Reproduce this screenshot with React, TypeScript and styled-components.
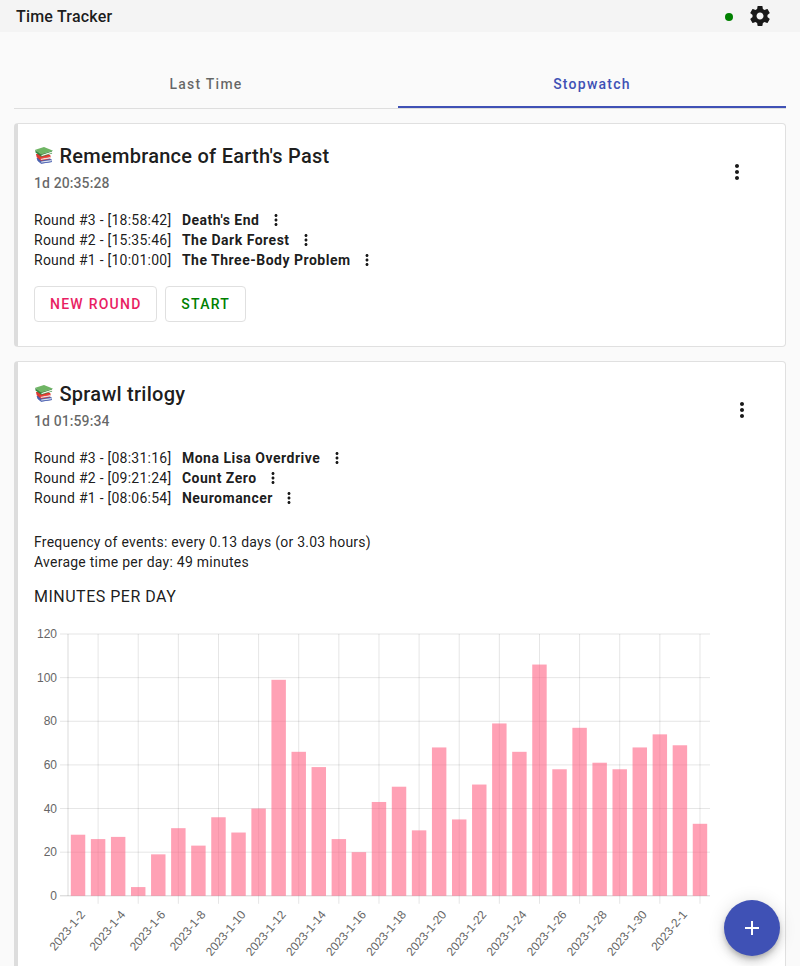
import React from "react";
import styled, { createGlobalStyle } from "styled-components";

const GlobalStyle = createGlobalStyle`
  * { box-sizing: border-box; }
  html, body, #root { height: 100%; }
  body {
    margin: 0;
    overflow: hidden;
    background: #fafafa;
    color: rgba(0, 0, 0, 0.9);
    font-family: Roboto, "Liberation Sans", sans-serif;
    font-size: 14px;
    line-height: 20px;
    -webkit-font-smoothing: antialiased;
  }
`;

const Page = styled.div`
  height: 966px;
  overflow: hidden;
`;

const TopBar = styled.header`
  display: flex;
  align-items: center;
  height: 32px;
  padding: 0 28px 0 16px;
  background: #f4f4f4;
`;

const AppTitle = styled.h1`
  flex: 1;
  margin: 0;
  padding-top: 1px;
  font-size: 16px;
  line-height: 31px;
  font-weight: 500;
  letter-spacing: 0.2px;
`;

const StatusDot = styled.span`
  width: 8px;
  height: 8px;
  margin: 2px 15px 0 0;
  border-radius: 50%;
  background: #008000;
`;

const Main = styled.main`
  padding: 28px 14px 0;
`;

const TabBar = styled.nav`
  display: grid;
  grid-template-columns: 384px 388px;
  height: 49px;
  border-bottom: 1px solid #dedede;
`;

const Tab = styled.button<{ $active?: boolean }>`
  height: 48px;
  padding: 2px 0 0;
  border: 0;
  border-bottom: 2px solid ${(p) => (p.$active ? "#3f51b5" : "transparent")};
  background: none;
  color: ${(p) => (p.$active ? "#3f51b5" : "rgba(0, 0, 0, 0.6)")};
  font: 500 14px/20px Roboto, sans-serif;
  letter-spacing: 1.25px;
`;

const Card = styled.article<{ $height: number }>`
  display: flex;
  justify-content: space-between;
  height: ${(p) => p.$height}px;
  margin-top: 14px;
  padding: 20px 16px 0;
  border: 1px solid #e0e0e0;
  border-left: 4px solid #dddddd;
  border-radius: 4px;
  background: #fff;
`;

const CardBody = styled.div`
  min-width: 0;
`;

const CardMenu = styled.button<{ $inset: number }>`
  width: 24px;
  height: 24px;
  margin: 16px ${(p) => p.$inset}px 0 0;
  padding: 0;
  border: 0;
  background: none;
  color: inherit;
`;

const CardTitle = styled.h2`
  display: flex;
  align-items: center;
  gap: 5.5px;
  height: 24px;
  margin: 0;
  font-size: 20px;
  line-height: 24px;
  font-weight: 500;
  letter-spacing: 0.26px;
`;

const Total = styled.div`
  margin-top: 5px;
  color: rgba(0, 0, 0, 0.6);
  font-weight: 500;
  line-height: 20px;
  letter-spacing: 0.1px;
`;

const Rounds = styled.ul`
  margin: 17px 0 0;
  padding: 0;
  list-style: none;
`;

const RoundRow = styled.li`
  display: flex;
  align-items: center;
  height: 20px;
  letter-spacing: 0.25px;
  white-space: pre;

  strong {
    margin: 0 7.3px 0 10.5px;
    font-weight: 700;
    letter-spacing: 0.5px;
  }
`;

const Actions = styled.div`
  display: flex;
  gap: 8px;
  margin-top: 16px;
`;

const ActionButton = styled.button<{ $color: string }>`
  height: 36px;
  padding: 0 14.7px 0 15px;
  border: 1px solid #e0e0e0;
  border-radius: 4px;
  background: #fff;
  color: ${(p) => p.$color};
  font: 500 14px/34px Roboto, sans-serif;
  letter-spacing: 1.25px;
`;

const Stats = styled.div`
  margin-top: 24px;
  letter-spacing: 0.25px;
`;

const ChartTitle = styled.h3`
  margin: 13px 0 16px;
  font-size: 16px;
  line-height: 24px;
  font-weight: 400;
  letter-spacing: 0.5px;
`;

const ChartSvg = styled.svg`
  display: block;
  overflow: visible;

  text {
    fill: #666;
    font: 12px "Liberation Sans", Arial, sans-serif;
    text-anchor: end;
  }
`;

const Fab = styled.button`
  position: fixed;
  right: 20px;
  bottom: 9.6px;
  display: flex;
  align-items: center;
  justify-content: center;
  width: 56px;
  height: 56px;
  padding: 0;
  border: 0;
  border-radius: 50%;
  background: #3f51b5;
  color: #fff;
  box-shadow: 0 3px 5px -1px rgba(0, 0, 0, 0.2), 0 6px 10px 0 rgba(0, 0, 0, 0.14),
    0 1px 18px 0 rgba(0, 0, 0, 0.12);
`;

const Icon = styled.svg`
  display: block;
  flex: none;
  fill: currentColor;
`;

const MoreIcon = ({ size }: { size: number }) => (
  <Icon width={size} height={size} viewBox="0 0 24 24">
    <path d="M12 8c1.1 0 2-.9 2-2s-.9-2-2-2-2 .9-2 2 .9 2 2 2zm0 2c-1.1 0-2 .9-2 2s.9 2 2 2 2-.9 2-2-.9-2-2-2zm0 6c-1.1 0-2 .9-2 2s.9 2 2 2 2-.9 2-2-.9-2-2-2z" />
  </Icon>
);

const GearIcon = () => (
  <Icon width="24" height="24" viewBox="0 0 24 24">
    <path d="M19.43 12.98c.04-.32.07-.64.07-.98s-.03-.66-.07-.98l2.11-1.65c.19-.15.24-.42.12-.64l-2-3.46c-.12-.22-.39-.3-.61-.22l-2.49 1c-.52-.4-1.08-.73-1.69-.98l-.38-2.65C14.46 2.18 14.25 2 14 2h-4c-.25 0-.46.18-.49.42l-.38 2.65c-.61.25-1.17.59-1.69.98l-2.49-1c-.23-.09-.49 0-.61.22l-2 3.46c-.13.22-.07.49.12.64l2.11 1.65c-.04.32-.07.65-.07.98s.03.66.07.98l-2.11 1.65c-.19.15-.24.42-.12.64l2 3.46c.12.22.39.3.61.22l2.49-1c.52.4 1.08.73 1.69.98l.38 2.65c.03.24.24.42.49.42h4c.25 0 .46-.18.49-.42l.38-2.65c.61-.25 1.17-.59 1.69-.98l2.49 1c.23.09.49 0 .61-.22l2-3.46c.12-.22.07-.49-.12-.64l-2.11-1.65zM12 15.5c-1.93 0-3.5-1.57-3.5-3.5s1.57-3.5 3.5-3.5 3.5 1.57 3.5 3.5-1.57 3.5-3.5 3.5z" />
  </Icon>
);

const BooksIcon = () => (
  <Icon width="20" height="20" viewBox="0 0.8 20 20">
    <path d="M2.6 12.7 12 11.6l6 3-.2 2.2-10.6 1.6-3.8-3.2z" fill="#4b61ad" />
    <path d="M7.2 16.3 17.7 14.7v1.5L7.4 17.7z" fill="#dfe3ee" />
    <path d="M7 17.6 18 16v.7L7.1 18.5 4 16.1l.3-.6z" fill="#5267b5" />
    <path d="M2 8.7 12 8l4.4 2.1-.3 3.7-9.1 1.7L2.7 12z" fill="#d93631" />
    <path d="M6.8 13.3 16.2 11.8v1.4L6.8 14.9z" fill="#e9dcdf" />
    <path d="M2.4 8.8 6.7 12.5 16.5 10.6v1L6.8 13.5z" fill="#ef4b3e" />
    <path d="M1.4 5.2 7.3 9.4 17.9 5.8l.2 2.4L7.4 11.6 1.5 7.4z" fill="#32833b" />
    <path d="M7.5 9.6 18 6.2v1.6L7.5 11z" fill="#edf3e9" />
    <path d="M1.3 4.6 10 1.7 18.6 5.3 7.4 9z" fill="#6fb564" />
    <path d="M1.3 4.6 7.4 9 18.6 5.3v.6L7.3 9.8 1.4 5.6z" fill="#469349" />
  </Icon>
);

const DAILY_MINUTES = [
  28, 26, 27, 4, 19, 31, 23, 36, 29, 40, 99, 66, 59, 26, 20, 43, 50, 30, 68, 35, 51, 79, 66, 106,
  58, 77, 61, 58, 68, 74, 69, 33,
];
const Y_TICKS = [0, 20, 40, 60, 80, 100, 120];
const PLOT = { left: 34, right: 676, top: 9, bottom: 270.8 };
const STEP = (PLOT.right - PLOT.left) / DAILY_MINUTES.length;
const BAR = STEP * 0.72;
const centerOf = (i: number) => PLOT.left + STEP * (i + 0.5);
const yOf = (v: number) => PLOT.bottom - ((PLOT.bottom - PLOT.top) * v) / 120;
const dateLabel = (i: number) => (i < 30 ? `2023-1-${i + 2}` : `2023-2-${i - 29}`);

const MinutesChart = () => (
  <ChartSvg width="680" height="345" viewBox="0 0 680 345">
    {Y_TICKS.map((v) => (
      <React.Fragment key={v}>
        <line
          x1={PLOT.left - 8}
          x2={PLOT.right}
          y1={yOf(v)}
          y2={yOf(v)}
          stroke={v === 0 ? "rgba(0,0,0,0.18)" : "rgba(0,0,0,0.1)"}
        />
        <text x={23} y={yOf(v) + 4}>
          {v}
        </text>
      </React.Fragment>
    ))}
    <line x1={PLOT.left} x2={PLOT.left} y1={PLOT.top} y2={PLOT.bottom} stroke="rgba(0,0,0,0.14)" />
    {DAILY_MINUTES.map((_, i) =>
      i % 2 === 1 ? (
        <line
          key={i}
          x1={centerOf(i)}
          x2={centerOf(i)}
          y1={PLOT.top}
          y2={PLOT.bottom + 8}
          stroke="rgba(0,0,0,0.1)"
        />
      ) : (
        <text key={i} transform={`translate(${centerOf(i) + 7.8} ${PLOT.bottom + 19}) rotate(-50)`}>
          {dateLabel(i)}
        </text>
      )
    )}
    {DAILY_MINUTES.map((v, i) => (
      <rect
        key={i}
        x={centerOf(i) - BAR / 2}
        y={yOf(v)}
        width={BAR}
        height={PLOT.bottom - yOf(v)}
        fill="rgba(255,99,132,0.6)"
      />
    ))}
  </ChartSvg>
);

type Round = { n: number; time: string; name: string };

const RoundList = ({ rounds }: { rounds: Round[] }) => (
  <Rounds>
    {rounds.map((r) => (
      <RoundRow key={r.n}>
        <span>{`Round #${r.n} - [${r.time}]`}</span>
        <strong>{r.name}</strong>
        <MoreIcon size={18} />
      </RoundRow>
    ))}
  </Rounds>
);

export default function App() {
  return (
    <Page>
      <GlobalStyle />
      <TopBar>
        <AppTitle>Time Tracker</AppTitle>
        <StatusDot />
        <GearIcon />
      </TopBar>
      <Main>
        <TabBar>
          <Tab>Last Time</Tab>
          <Tab $active>Stopwatch</Tab>
        </TabBar>
        <Card $height={224}>
          <CardBody>
            <CardTitle>
              <BooksIcon />
              Remembrance of Earth's Past
            </CardTitle>
            <Total>1d 20:35:28</Total>
            <RoundList
              rounds={[
                { n: 3, time: "18:58:42", name: "Death's End" },
                { n: 2, time: "15:35:46", name: "The Dark Forest" },
                { n: 1, time: "10:01:00", name: "The Three-Body Problem" },
              ]}
            />
            <Actions>
              <ActionButton $color="#e91e63">NEW ROUND</ActionButton>
              <ActionButton $color="#008000">START</ActionButton>
            </Actions>
          </CardBody>
          <CardMenu $inset={20} aria-label="Menu">
            <MoreIcon size={24} />
          </CardMenu>
        </Card>
        <Card $height={640}>
          <CardBody>
            <CardTitle>
              <BooksIcon />
              Sprawl trilogy
            </CardTitle>
            <Total>1d 01:59:34</Total>
            <RoundList
              rounds={[
                { n: 3, time: "08:31:16", name: "Mona Lisa Overdrive" },
                { n: 2, time: "09:21:24", name: "Count Zero" },
                { n: 1, time: "08:06:54", name: "Neuromancer" },
              ]}
            />
            <Stats>
              <div>Frequency of events: every 0.13 days (or 3.03 hours)</div>
              <div>Average time per day: 49 minutes</div>
            </Stats>
            <ChartTitle>MINUTES PER DAY</ChartTitle>
            <MinutesChart />
          </CardBody>
          <CardMenu $inset={15} aria-label="Menu">
            <MoreIcon size={24} />
          </CardMenu>
        </Card>
      </Main>
      <Fab aria-label="Add">
        <Icon width="24" height="24" viewBox="0 0 24 24">
          <path d="M19 13h-6v6h-2v-6H5v-2h6V5h2v6h6v2z" />
        </Icon>
      </Fab>
    </Page>
  );
}
